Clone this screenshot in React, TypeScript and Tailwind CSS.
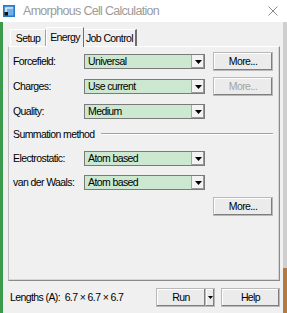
import React from "react";

const FONT = '"Liberation Sans",Arial,sans-serif';
const T = "text-[10.5px] leading-none tracking-[-0.6px] whitespace-nowrap";

function Arrow() {
  return (
    <svg width="7" height="4" viewBox="0 0 7 4">
      <polygon points="0,0 7,0 3.5,4" fill="#000" />
    </svg>
  );
}

function Combo({ value }: { value: string }) {
  return (
    <div className="w-[121px] h-[15px] border border-[#7a7a7a] bg-[#cde8d0] flex items-stretch">
      <div className={`flex-1 pl-[3px] flex items-center text-black ${T}`}>{value}</div>
      <div className="w-[13px] bg-[#f3f3f3] border-l border-[#a8a8a8] shadow-[inset_-1px_-1px_0_#9a9a9a] flex items-center justify-center">
        <Arrow />
      </div>
    </div>
  );
}

function Btn({ label, disabled, w = "w-[60px]" }: { label: string; disabled?: boolean; w?: string }) {
  return (
    <div
      className={`${w} h-[19px] bg-[#ebebeb] border border-[#b9b9b9] shadow-[inset_-1px_-1px_0_#7e7e7e,inset_1px_1px_0_#ffffff] flex items-center justify-center ${T} ${
        disabled ? "text-[#a3a3a3]" : "text-black"
      }`}
    >
      {label}
    </div>
  );
}

function Row({ label, value, btn, btnDisabled }: { label: string; value: string; btn?: boolean; btnDisabled?: boolean }) {
  return (
    <div className="h-[19px] flex items-center">
      <div className={`w-[71px] text-black ${T}`}>{label}</div>
      <Combo value={value} />
      {btn && (
        <div className="ml-[8px]">
          <Btn label="More..." disabled={btnDisabled} />
        </div>
      )}
    </div>
  );
}

export default function App() {
  return (
    <div className="w-[287px] h-[313px] bg-[#f0f0f0] flex flex-col overflow-hidden" style={{ fontFamily: FONT }}>
      {/* Title bar */}
      <div className="h-[22px] bg-white flex items-center shrink-0">
        <svg className="ml-[3px]" width="12" height="12" viewBox="0 0 12 12">
          <rect x="0" y="0" width="12" height="12" fill="#2a78c2" />
          <rect x="1.5" y="1.5" width="9" height="9" fill="#6fb0e8" />
          <path d="M3 10 V3 H10" stroke="#ffffff" strokeWidth="1.2" fill="none" />
          <rect x="1.5" y="7" width="3.5" height="3.5" fill="#111" />
        </svg>
        <div className="ml-[8px] text-[12.5px] leading-none tracking-[-0.7px] text-[#9b9b9b] whitespace-nowrap">
          Amorphous Cell Calculation
        </div>
        <div className="ml-auto mr-[9px]">
          <svg width="10" height="10" viewBox="0 0 10 10">
            <path d="M0.5 0.5 L9.5 9.5 M9.5 0.5 L0.5 9.5" stroke="#8a8a8a" strokeWidth="1" />
          </svg>
        </div>
      </div>

      <div className="flex-1 flex">
        {/* left desktop strip */}
        <div className="w-[3px] bg-[#3c9a4c]" />

        {/* main window body */}
        <div className="flex-1 flex flex-col">
          {/* tabs */}
          <div className="h-[24px] pl-[7px] flex items-end">
            <div className={`w-[36px] h-[17px] border-t border-l border-[#ffffff] border-r border-r-[#a0a0a0] flex items-center justify-center text-black ${T}`}>
              Setup
            </div>
            <div className={`w-[38px] h-[20px] -mb-px relative z-10 bg-[#f0f0f0] border-t border-l border-[#ffffff] border-r border-r-[#6e6e6e] flex items-start justify-center pt-[4px] text-black ${T}`}>
              Energy
            </div>
            <div className={`w-[53px] h-[17px] border-t border-[#ffffff] border-r-2 border-r-[#6e6e6e] flex items-center justify-center text-black ${T}`}>
              Job Control
            </div>
          </div>

          {/* panel */}
          <div className="ml-[5px] mr-[3px] h-[235px] border border-t-white border-l-[#bdbdbd] border-r-[#8a8a8a] border-b-[#8a8a8a] shadow-[inset_-1px_-1px_0_#d6d6d6] pl-[4px] pt-[5px] flex flex-col">
            <Row label="Forcefield:" value="Universal" btn />
            <div className="mt-[6px]">
              <Row label="Charges:" value="Use current" btn btnDisabled />
            </div>
            <div className="mt-[6px]">
              <Row label="Quality:" value="Medium" />
            </div>
            <div className="mt-[6px] h-[14px] flex items-center">
              <div className={`text-black ${T}`}>Summation method</div>
              <div className="ml-[7px] mr-[6px] flex-1 h-[2px] border-t border-[#a0a0a0] border-b border-b-white" />
            </div>
            <div className="mt-[8px]">
              <Row label="Electrostatic:" value="Atom based" />
            </div>
            <div className="mt-[5px]">
              <Row label="van der Waals:" value="Atom based" />
            </div>
            <div className="mt-[5px] flex">
              <div className="ml-[200px]">
                <Btn label="More..." />
              </div>
            </div>
          </div>

          {/* bottom row */}
          <div className="flex-1 flex items-start pt-[7px] pl-[7px]">
            <div className={`w-[146px] h-[19px] flex items-center text-black ${T}`}>
              Lengths (A):&nbsp;&nbsp;6.7 × 6.7 × 6.7
            </div>
            <div className="flex">
              <Btn label="Run" w="w-[50px]" />
              <div className="w-[9px] h-[19px] bg-[#ebebeb] border border-[#b9b9b9] border-l-0 shadow-[inset_-1px_-1px_0_#7e7e7e,inset_1px_1px_0_#ffffff] flex items-center justify-center">
                <svg width="5" height="3" viewBox="0 0 5 3">
                  <polygon points="0,0 5,0 2.5,3" fill="#000" />
                </svg>
              </div>
            </div>
            <div className="ml-[6px]">
              <Btn label="Help" w="w-[59px]" />
            </div>
          </div>
        </div>

        {/* right strip */}
        <div className="w-[4px] flex flex-col">
          <div className="h-[246px] bg-[#cfcfcf]" />
          <div className="flex-1 bg-[#b47a44]" />
        </div>
      </div>
    </div>
  );
}
